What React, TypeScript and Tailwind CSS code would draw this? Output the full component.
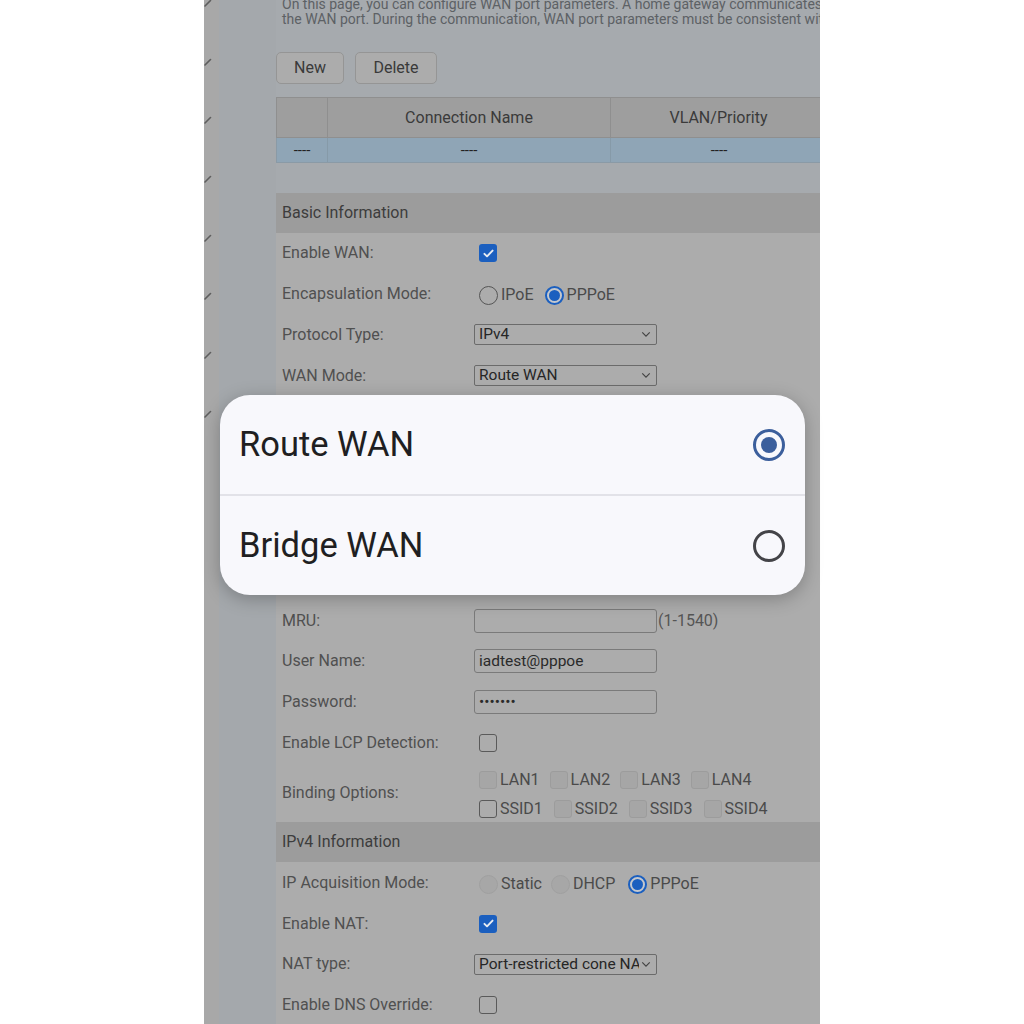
import React from "react";

const font = { fontFamily: "Roboto, 'Noto Sans', sans-serif" };

const Check = ({ on, off }: { on?: boolean; off?: boolean }) => {
  if (on)
    return (
      <span className="flex h-[18px] w-[18px] items-center justify-center rounded-[3px] bg-[#1b5fbf]">
        <svg viewBox="0 0 16 16" className="h-[13px] w-[13px]">
          <path d="M3 8.5l3.2 3L13 4.5" fill="none" stroke="#e8ecf2" strokeWidth="2.4" strokeLinecap="round" strokeLinejoin="round" />
        </svg>
      </span>
    );
  if (off) return <span className="block h-[18px] w-[18px] rounded-[3px] border border-[#9c9c9c] bg-[#a6a6a6]" />;
  return <span className="block h-[18px] w-[18px] rounded-[3px] border-[1.5px] border-[#5a5a5a]" />;
};

const Radio = ({ on, off }: { on?: boolean; off?: boolean }) => {
  if (on)
    return (
      <span className="flex h-[19px] w-[19px] items-center justify-center rounded-full border-2 border-[#1b5fbf] bg-[#c4c8ce]">
        <span className="block h-[11px] w-[11px] rounded-full bg-[#1b5fbf]" />
      </span>
    );
  if (off) return <span className="block h-[19px] w-[19px] rounded-full border border-[#a0a0a0] bg-[#a7a7a7]" />;
  return <span className="block h-[19px] w-[19px] rounded-full border-[1.5px] border-[#555]" />;
};

const Select = ({ value }: { value: string }) => (
  <div className="flex h-[21px] w-[183px] items-center rounded-[2px] border border-[#6b6b6b] pl-[4px] pr-[5px] text-[15.5px] text-[#262626]">
    <span className="flex-1 overflow-hidden whitespace-nowrap">{value}</span>
    <svg viewBox="0 0 12 8" className="ml-[2px] h-[7px] w-[10px] shrink-0">
      <path d="M1.5 1.5l4.5 4.5 4.5-4.5" fill="none" stroke="#444" strokeWidth="1.4" />
    </svg>
  </div>
);

const Input = ({ value }: { value?: string }) => (
  <div className="flex h-[24px] w-[183px] items-center rounded-[3px] border-[1.5px] border-[#7a7a7a] pl-[4px] text-[15.5px] text-[#2a2a2a]">
    {value}
  </div>
);

const Row = ({ label, children, tall }: { label: string; children?: React.ReactNode; tall?: boolean }) => (
  <div className={`flex items-center bg-[#acacac] ${tall ? "h-[59px]" : "h-[40.8px]"}`}>
    <div className="w-[198px] shrink-0 pl-[6px] text-[16px] text-[#505050] whitespace-nowrap">{label}</div>
    <div className="flex items-center">{children}</div>
  </div>
);

const Header = ({ title }: { title: string }) => (
  <div className="flex h-[40px] items-center bg-[#9c9c9c] pl-[6px] text-[16px] text-[#3d3d3d]">{title}</div>
);

const Opt = ({ label, radio, on, off, gap = "mr-[8px]" }: { label: string; radio?: boolean; on?: boolean; off?: boolean; gap?: string }) => (
  <div className={`flex items-center ${gap}`}>
    {radio ? <Radio on={on} off={off} /> : <Check off={off} />}
    <span className="ml-[3px] text-[16px] text-[#4a4a4a]">{label}</span>
  </div>
);

export default function App() {
  return (
    <div className="relative flex h-[1024px] w-[1024px] justify-center overflow-hidden bg-white" style={font}>
      <div className="flex h-full w-[616px] overflow-hidden">
        {/* left rail */}
        <div className="flex w-[15px] shrink-0 flex-col gap-[50.7px] bg-[#a8a8a8]">
          {[0, 1, 2, 3, 4, 5, 6, 7].map((i) => (
            <svg key={i} viewBox="0 0 8 8" className={`h-[8px] w-[8px] ${i === 0 ? "-mt-[1px]" : ""}`}>
              <path d="M1 7L6.5 1.5" stroke="#5e5e5e" strokeWidth="1.6" strokeLinecap="round" />
            </svg>
          ))}
        </div>
        <div className="w-[57px] shrink-0 bg-[#a4a8ac]" />

        {/* page */}
        <div className="flex w-[544px] flex-col overflow-hidden bg-[#a6aaae]">
          <div className="-mt-[3px] pl-[6px] text-[14px] leading-[15px] text-[#5d6165] whitespace-nowrap">
            <p>On this page, you can configure WAN port parameters. A home gateway communicates with the upper-layer device through</p>
            <p>the WAN port. During the communication, WAN port parameters must be consistent with those of the upper-layer device.</p>
          </div>

          <div className="mt-[25px] flex gap-[11px] text-[16px] text-[#3a3a3a]">
            <button className="h-[32px] w-[68px] rounded-[5px] border border-[#959595] bg-[#acacac]">New</button>
            <button className="h-[32px] w-[82px] rounded-[5px] border border-[#959595] bg-[#acacac]">Delete</button>
          </div>

          <div className="mt-[13px] w-[700px] text-[16px] text-[#3a3a3a]">
            <div className="flex h-[41px] border border-[#8f8f8f] bg-[#9e9e9e]">
              <div className="w-[51px] border-r border-[#8f8f8f]" />
              <div className="flex w-[283px] items-center justify-center border-r border-[#8f8f8f]">Connection Name</div>
              <div className="flex w-[216px] items-center justify-center border-r border-[#8f8f8f]">VLAN/Priority</div>
              <div className="flex-1" />
            </div>
            <div className="flex h-[25px] border-x border-b border-[#8a9aa6] bg-[#8fa5b6] text-[15px] text-[#222]">
              <div className="flex w-[51px] items-center justify-center border-r border-[#869aa8]">----</div>
              <div className="flex w-[283px] items-center justify-center border-r border-[#869aa8]">----</div>
              <div className="flex w-[216px] items-center justify-center">----</div>
            </div>
          </div>

          <div className="mt-[30px]">
            <Header title="Basic Information" />
            <Row label="Enable WAN:">
              <span className="ml-[5px]"><Check on /></span>
            </Row>
            <Row label="Encapsulation Mode:">
              <div className="ml-[5px] flex items-center pt-[2px]">
                <Opt label="IPoE" radio gap="mr-[11px]" />
                <Opt label="PPPoE" radio on />
              </div>
            </Row>
            <Row label="Protocol Type:"><Select value="IPv4" /></Row>
            <Row label="WAN Mode:"><Select value="Route WAN" /></Row>
            <Row label="Service Type:"><Select value="INTERNET" /></Row>
            <Row label="Enable VLAN:"><span className="ml-[5px]"><Check on /></span></Row>
            <Row label="VLAN ID:"><Input value="1" /></Row>
            <Row label="802.1p Policy:"><Select value="Use the specified value" /></Row>
            <Row label="802.1p:"><Select value="0" /></Row>
            <Row label="MRU:">
              <Input />
              <span className="ml-[1px] text-[16px] text-[#555]">(1-1540)</span>
            </Row>
            <Row label="User Name:"><Input value="iadtest@pppoe" /></Row>
            <Row label="Password:"><Input value="•••••••" /></Row>
            <Row label="Enable LCP Detection:">
              <span className="ml-[5px]"><Check /></span>
            </Row>
            <Row label="Binding Options:" tall>
              <div className="ml-[5px] flex flex-col gap-[9px] pt-[7px]">
                <div className="flex h-[20px] items-end">
                  <Opt label="LAN1" off gap="mr-[10px]" />
                  <Opt label="LAN2" off gap="mr-[10px]" />
                  <Opt label="LAN3" off gap="mr-[10px]" />
                  <Opt label="LAN4" off />
                </div>
                <div className="flex h-[20px] items-end">
                  <Opt label="SSID1" gap="mr-[11px]" />
                  <Opt label="SSID2" off gap="mr-[11px]" />
                  <Opt label="SSID3" off gap="mr-[11px]" />
                  <Opt label="SSID4" off />
                </div>
              </div>
            </Row>
            <Header title="IPv4 Information" />
            <Row label="IP Acquisition Mode:">
              <div className="ml-[5px] flex items-center pt-[3px]">
                <Opt label="Static" radio off gap="mr-[9px]" />
                <Opt label="DHCP" radio off gap="mr-[13px]" />
                <Opt label="PPPoE" radio on />
              </div>
            </Row>
            <Row label="Enable NAT:">
              <span className="ml-[5px]"><Check on /></span>
            </Row>
            <Row label="NAT type:"><Select value="Port-restricted cone NAT" /></Row>
            <Row label="Enable DNS Override:">
              <span className="ml-[5px]"><Check /></span>
            </Row>
          </div>
        </div>
      </div>

      {/* WAN mode picker */}
      <div className="absolute left-[220px] top-[395px] flex w-[585px] flex-col overflow-hidden rounded-[30px] bg-[#f8f8fc] shadow-[0_4px_18px_rgba(0,0,0,0.25)]">
        <div className="flex h-[99px] items-center justify-between pl-[19px] pr-[20px]">
          <span className="text-[34.5px] text-[#1f1f22]">Route WAN</span>
          <span className="flex h-[32px] w-[32px] items-center justify-center rounded-full border-[3px] border-[#3c5f9c]">
            <span className="block h-[16px] w-[16px] rounded-full bg-[#3c5f9c]" />
          </span>
        </div>
        <div className="h-[2px] bg-[#e2e2e8]" />
        <div className="flex h-[99px] items-center justify-between pl-[19px] pr-[20px]">
          <span className="text-[34.5px] text-[#1f1f22]">Bridge WAN</span>
          <span className="block h-[32px] w-[32px] rounded-full border-[3px] border-[#444448]" />
        </div>
      </div>
    </div>
  );
}
